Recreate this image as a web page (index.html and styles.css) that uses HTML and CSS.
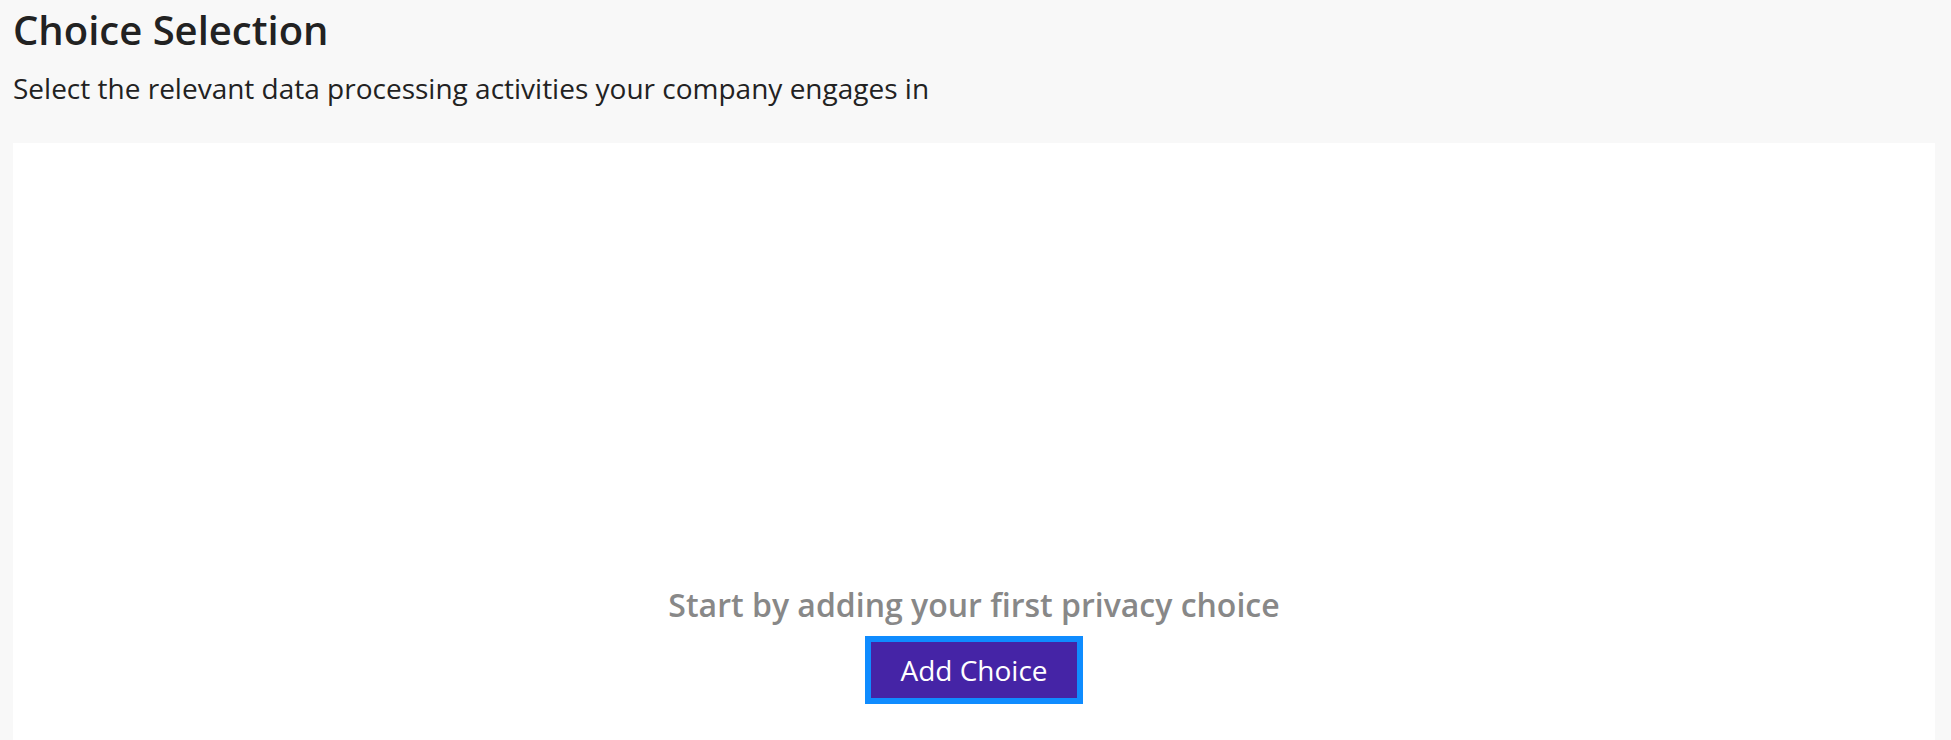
FILE: index.html
```html
<!DOCTYPE html>
<html lang="en">
<head>
    <meta charset="UTF-8">
    <meta name="viewport" content="width=device-width, initial-scale=1.0">
    <title>Choice Selection</title>
    <link rel="stylesheet" href="styles.css">
</head>
<body>
    <div class="page">
        <header class="page-header">
            <h1>Choice Selection</h1>
            <p class="subtitle">Select the relevant data processing activities your company engages in</p>
        </header>

        <div class="choices-panel">
            <div class="empty-state">
                <p class="empty-text">Start by adding your first privacy choice</p>
                <button class="add-btn">Add Choice</button>
            </div>
        </div>
    </div>
</body>
</html>
```

FILE: styles.css
```css
* {
    margin: 0;
    padding: 0;
    box-sizing: border-box;
}

body {
    font-family: 'Open Sans', 'Noto Sans', sans-serif;
    background: #f8f8f8;
    color: #222;
}

.page {
    padding: 3px 16px 0 13px;
}

.page-header {
    margin-bottom: 35px;
}

h1 {
    font-size: 40px;
    font-weight: 600;
    line-height: 1.362;
    color: #222;
}

.subtitle {
    font-size: 28px;
    line-height: 1.362;
    margin-top: 12px;
    color: #222;
}

.choices-panel {
    background: #fff;
    height: 996px;
    display: flex;
    align-items: center;
    justify-content: center;
}

.empty-state {
    display: flex;
    flex-direction: column;
    align-items: center;
    gap: 15px;
}

.empty-text {
    font-size: 32px;
    font-weight: 600;
    color: #888;
    line-height: 1.362;
}

.add-btn {
    font-family: inherit;
    font-size: 28px;
    color: #fff;
    background: #4524a6;
    border: none;
    border-radius: 0;
    width: 206px;
    height: 56px;
    outline: 6px solid #0f8cff;
    cursor: pointer;
}
```
